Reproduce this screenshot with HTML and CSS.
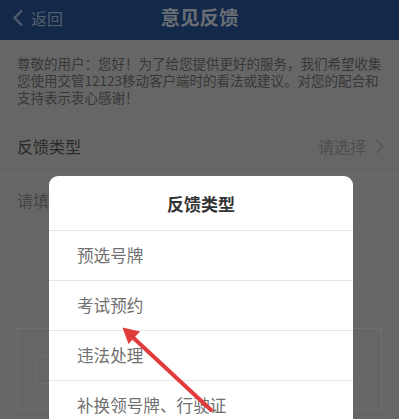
FILE: index.html
```html
<!DOCTYPE html>
<html lang="zh">
<head>
<meta charset="utf-8">
<link rel="stylesheet" href="styles.css">
</head>
<body>
<div class="page">
  <header class="topbar">
    <div class="back">
      <svg class="back-icon" width="12" height="18" viewBox="0 0 12 18"><path d="M10 1.5 L2.5 9 L10 16.5" fill="none" stroke="currentColor" stroke-width="2.2"/></svg>
      <span>返回</span>
    </div>
    <h1 class="title">意见反馈</h1>
  </header>
  <p class="intro">尊敬的用户：您好！为了给您提供更好的服务，我们希望收集<br>您使用交管12123移动客户端时的看法或建议。对您的配合和<br>支持表示衷心感谢！</p>
  <div class="row">
    <span class="row-label">反馈类型</span>
    <span class="row-value">请选择
      <svg class="chev" width="9" height="15" viewBox="0 0 9 15"><path d="M1.5 1 L7.5 7.5 L1.5 14" fill="none" stroke="currentColor" stroke-width="1.8"/></svg>
    </span>
  </div>
  <div class="field">请填</div>
  <div class="photo-box"><div class="photo-add"></div></div>
</div>

<div class="mask"></div>

<div class="dialog">
  <div class="dialog-title">反馈类型</div>
  <ul class="options">
    <li>预选号牌</li>
    <li>考试预约</li>
    <li>违法处理</li>
    <li>补换领号牌、行驶证</li>
  </ul>
</div>

<svg class="annot" width="399" height="419" viewBox="0 0 399 419">
  <line x1="211" y1="410" x2="133" y2="337.5" stroke="#e23b3b" stroke-width="4" stroke-linecap="round"/>
  <polygon points="122.5,327.5 128.5,344 140,331.5" fill="#e23b3b"/>
</svg>
</body>
</html>
```
FILE: styles.css
```css
* { box-sizing: border-box; }
html, body { margin: 0; padding: 0; }
body {
  width: 399px;
  height: 419px;
  overflow: hidden;
  position: relative;
  font-family: "Noto Sans CJK SC", "Noto Sans", "Liberation Sans", sans-serif;
  background: #cdcdcd;
}
.page { width: 399px; }
.topbar {
  height: 40px;
  background: #265294;
  display: flex;
  align-items: center;
  position: relative;
  padding-bottom: 5px;
}
.back {
  display: flex;
  align-items: center;
  color: #a4bcdc;
  font-size: 16px;
  padding-left: 12px;
  gap: 7px;
}
.back span { line-height: 20px; }
.title {
  position: absolute;
  left: 0; right: 0; top: 4px;
  margin: 0;
  text-align: center;
  color: #d4dce8;
  font-size: 19.5px;
  font-weight: 700;
  line-height: 26px;
}
.intro {
  margin: 0;
  padding: 15px 0 18px 17px;
  font-size: 13.5px;
  line-height: 17px;
  color: #707070;
  white-space: nowrap;
}
.row {
  height: 51px;
  display: flex;
  justify-content: space-between;
  align-items: center;
  padding: 0 15px 6px 17px;
  border-bottom: 1px solid #dadada;
  font-size: 16px;
}
.row-label { color: #545454; }
.row-value {
  color: #9a9a9a;
  display: flex;
  align-items: center;
  gap: 9px;
}
.chev { color: #adadad; }
.field {
  padding: 13px 17px 0;
  font-size: 16px;
  line-height: 24px;
  color: #8a8a8a;
  height: 153px;
}
.photo-box {
  margin: 0 17px;
  height: 82px;
  border: 1px solid #dedede;
  position: relative;
}
.photo-add {
  position: absolute;
  left: 18px;
  top: 27px;
  width: 30px;
  height: 28px;
  border: 1px solid #dcdcdc;
  border-radius: 4px;
}
.mask {
  position: absolute;
  inset: 0;
  background: rgba(0, 0, 0, 0.5);
}
.dialog {
  position: absolute;
  left: 49px;
  top: 176px;
  width: 304px;
  background: #fff;
  border-radius: 9px 9px 0 0;
}
.dialog-title {
  height: 55px;
  border-bottom: 1px solid #e6e6e6;
  text-align: center;
  font-size: 17px;
  font-weight: 700;
  color: #333;
  line-height: 55px;
  padding-bottom: 3px;
}
.options {
  list-style: none;
  margin: 0;
  padding: 0;
}
.options li {
  height: 50px;
  line-height: 48px;
  padding-left: 28px;
  font-size: 16.6px;
  color: #707070;
  border-bottom: 1px solid #e6e6e6;
}
.annot {
  position: absolute;
  left: 0;
  top: 0;
}
```
